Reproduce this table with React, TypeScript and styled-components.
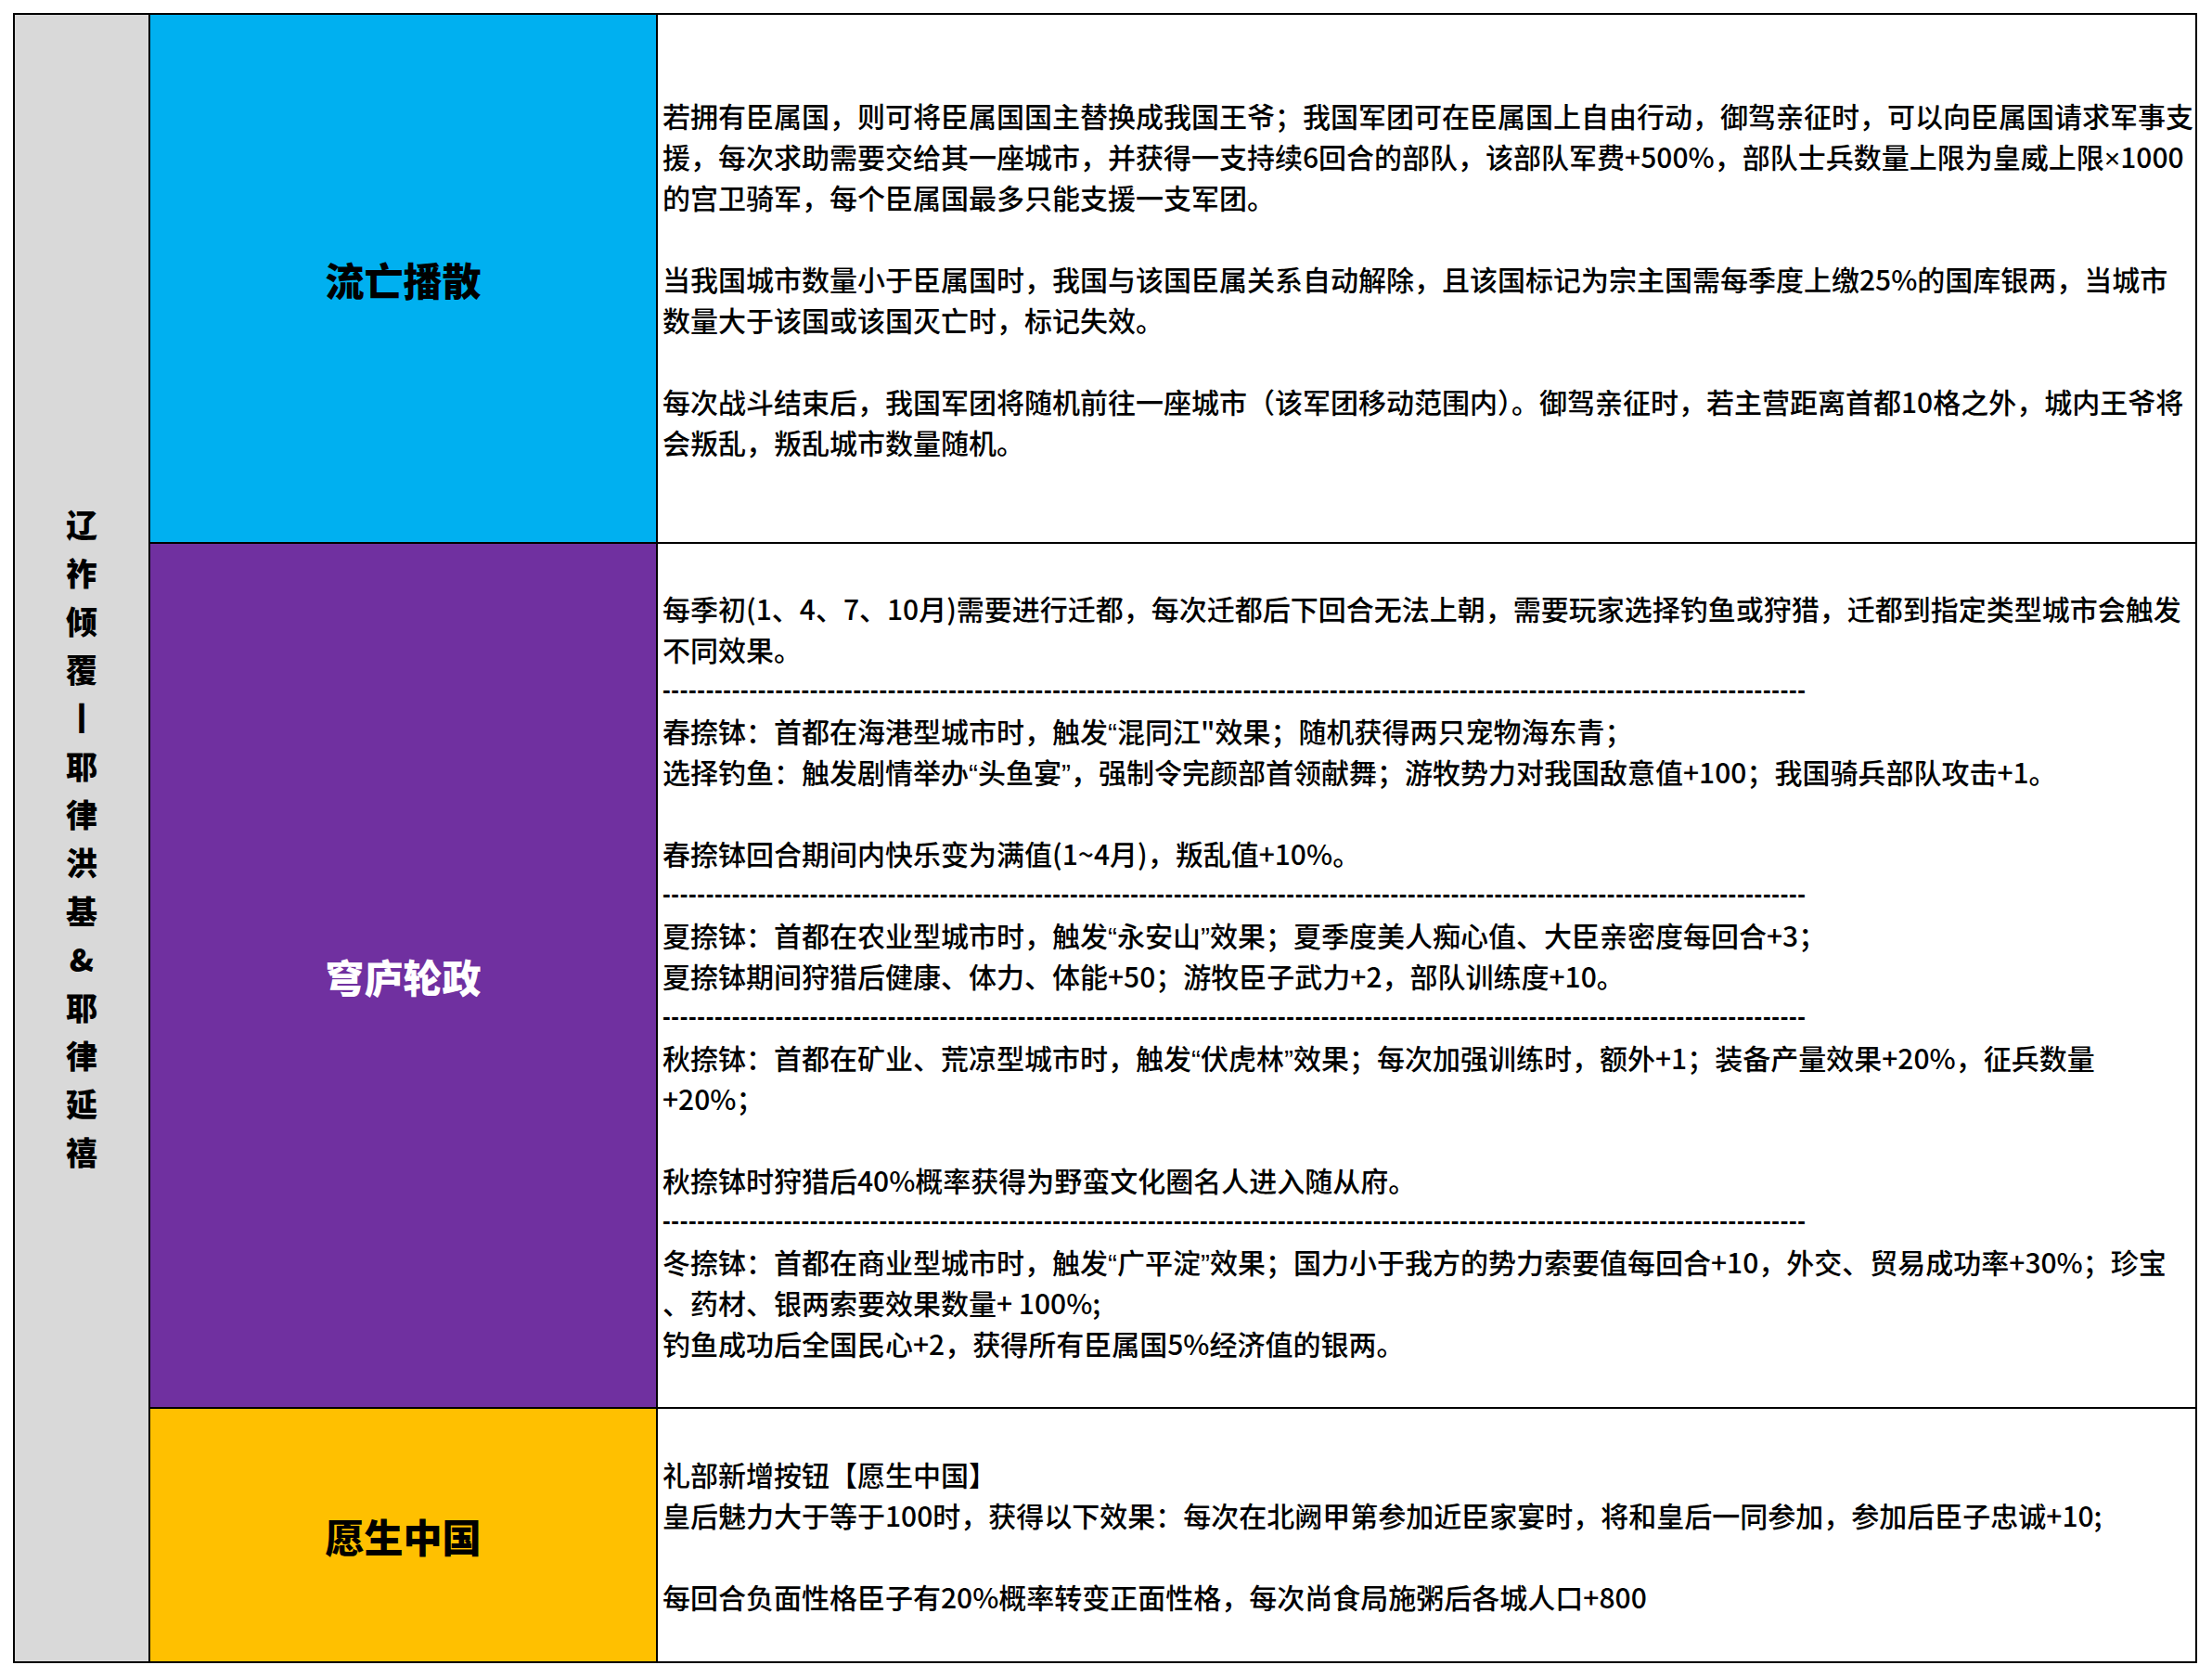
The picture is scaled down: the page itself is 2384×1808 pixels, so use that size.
import React from "react";
import styled, { createGlobalStyle } from "styled-components";

const GlobalStyle = createGlobalStyle`
  html, body {
    margin: 0;
    padding: 0;
    background: #ffffff;
  }
  body {
    font-family: "Noto Sans CJK SC", "Microsoft YaHei", "Noto Sans", sans-serif;
    color: #000000;
  }
`;

const Page = styled.div`
  padding: 14px 0 0 14px;
`;

const Sheet = styled.div`
  display: grid;
  width: 2354px;
  box-sizing: border-box;
  grid-template-columns: 144px 545px 1657px;
  grid-template-rows: 568px 930px 272px;
  gap: 2px;
  padding: 2px;
  background: #000000;
`;

const SideCell = styled.div`
  grid-column: 1;
  grid-row: 1 / span 3;
  background: #d9d9d9;
  display: flex;
  flex-direction: column;
  align-items: center;
  justify-content: center;
`;

const SideChar = styled.span`
  display: block;
  height: 52px;
  line-height: 52px;
  font-size: 34px;
  font-weight: 900;
  text-align: center;
`;

const CategoryCell = styled.div<{ $bg: string; $fg: string; $row: number }>`
  grid-column: 2;
  grid-row: ${(p) => p.$row};
  background: ${(p) => p.$bg};
  color: ${(p) => p.$fg};
  display: flex;
  align-items: center;
  justify-content: center;
  font-size: 42px;
  font-weight: 900;
`;

const DescCell = styled.div<{ $row: number }>`
  grid-column: 3;
  grid-row: ${(p) => p.$row};
  background: #ffffff;
  display: flex;
  flex-direction: column;
  justify-content: center;
  padding: 0 5px;
`;

const Line = styled.div`
  height: 44px;
  line-height: 44px;
  font-size: 30px;
  font-weight: 500;
  white-space: nowrap;
`;

const Narrow = styled.span`
  font-family: "Liberation Sans", Arial, sans-serif;
`;

const BlankLine = styled.div`
  height: 44px;
`;

const DashRule = styled.div`
  height: 44px;
  line-height: 44px;
  font-size: 26px;
  font-weight: 700;
  font-family: "Liberation Sans", Arial, sans-serif;
  white-space: nowrap;
  letter-spacing: 0.68px;
`;

type Item = { kind: "text"; text: string } | { kind: "blank" } | { kind: "dash" };

const t = (text: string): Item => ({ kind: "text", text });
const blank: Item = { kind: "blank" };
const dash: Item = { kind: "dash" };

const DASHES = "-".repeat(132);

const renderText = (text: string) =>
  text.split(/([“”×])/).map((part, i) =>
    /^[“”×]$/.test(part) ? <Narrow key={i}>{part}</Narrow> : <React.Fragment key={i}>{part}</React.Fragment>
  );

const rows: { title: string; bg: string; fg: string; lines: Item[] }[] = [
  {
    title: "流亡播散",
    bg: "#00b0f0",
    fg: "#000000",
    lines: [
      t("若拥有臣属国，则可将臣属国国主替换成我国王爷；我国军团可在臣属国上自由行动，御驾亲征时，可以向臣属国请求军事支"),
      t("援，每次求助需要交给其一座城市，并获得一支持续6回合的部队，该部队军费+500%，部队士兵数量上限为皇威上限×1000"),
      t("的宫卫骑军，每个臣属国最多只能支援一支军团。"),
      blank,
      t("当我国城市数量小于臣属国时，我国与该国臣属关系自动解除，且该国标记为宗主国需每季度上缴25%的国库银两，当城市"),
      t("数量大于该国或该国灭亡时，标记失效。"),
      blank,
      t("每次战斗结束后，我国军团将随机前往一座城市（该军团移动范围内）。御驾亲征时，若主营距离首都10格之外，城内王爷将"),
      t("会叛乱，叛乱城市数量随机。"),
    ],
  },
  {
    title: "穹庐轮政",
    bg: "#7030a0",
    fg: "#ffffff",
    lines: [
      t("每季初(1、4、7、10月)需要进行迁都，每次迁都后下回合无法上朝，需要玩家选择钓鱼或狩猎，迁都到指定类型城市会触发"),
      t("不同效果。"),
      dash,
      t("春捺钵：首都在海港型城市时，触发“混同江\"效果；随机获得两只宠物海东青；"),
      t("选择钓鱼：触发剧情举办“头鱼宴”，强制令完颜部首领献舞；游牧势力对我国敌意值+100；我国骑兵部队攻击+1。"),
      blank,
      t("春捺钵回合期间内快乐变为满值(1~4月)，叛乱值+10%。"),
      dash,
      t("夏捺钵：首都在农业型城市时，触发“永安山”效果；夏季度美人痴心值、大臣亲密度每回合+3；"),
      t("夏捺钵期间狩猎后健康、体力、体能+50；游牧臣子武力+2，部队训练度+10。"),
      dash,
      t("秋捺钵：首都在矿业、荒凉型城市时，触发“伏虎林”效果；每次加强训练时，额外+1；装备产量效果+20%，征兵数量"),
      t("+20%；"),
      blank,
      t("秋捺钵时狩猎后40%概率获得为野蛮文化圈名人进入随从府。"),
      dash,
      t("冬捺钵：首都在商业型城市时，触发“广平淀”效果；国力小于我方的势力索要值每回合+10，外交、贸易成功率+30%；珍宝"),
      t("、药材、银两索要效果数量+ 100%;"),
      t("钓鱼成功后全国民心+2，获得所有臣属国5%经济值的银两。"),
    ],
  },
  {
    title: "愿生中国",
    bg: "#ffc000",
    fg: "#000000",
    lines: [
      t("礼部新增按钮【愿生中国】"),
      t("皇后魅力大于等于100时，获得以下效果：每次在北阙甲第参加近臣家宴时，将和皇后一同参加，参加后臣子忠诚+10;"),
      blank,
      t("每回合负面性格臣子有20%概率转变正面性格，每次尚食局施粥后各城人口+800"),
    ],
  },
];

const SIDE_TITLE = "辽祚倾覆丨耶律洪基&耶律延禧";

export default function App() {
  return (
    <>
      <GlobalStyle />
      <Page>
        <Sheet>
          <SideCell>
            {Array.from(SIDE_TITLE).map((ch, i) => (
              <SideChar key={i}>{ch}</SideChar>
            ))}
          </SideCell>
          {rows.map((row, r) => (
            <React.Fragment key={row.title}>
              <CategoryCell $row={r + 1} $bg={row.bg} $fg={row.fg}>
                {row.title}
              </CategoryCell>
              <DescCell $row={r + 1}>
                {row.lines.map((item, i) =>
                  item.kind === "text" ? (
                    <Line key={i}>{renderText(item.text)}</Line>
                  ) : item.kind === "blank" ? (
                    <BlankLine key={i} />
                  ) : (
                    <DashRule key={i}>{DASHES}</DashRule>
                  )
                )}
              </DescCell>
            </React.Fragment>
          ))}
        </Sheet>
      </Page>
    </>
  );
}
